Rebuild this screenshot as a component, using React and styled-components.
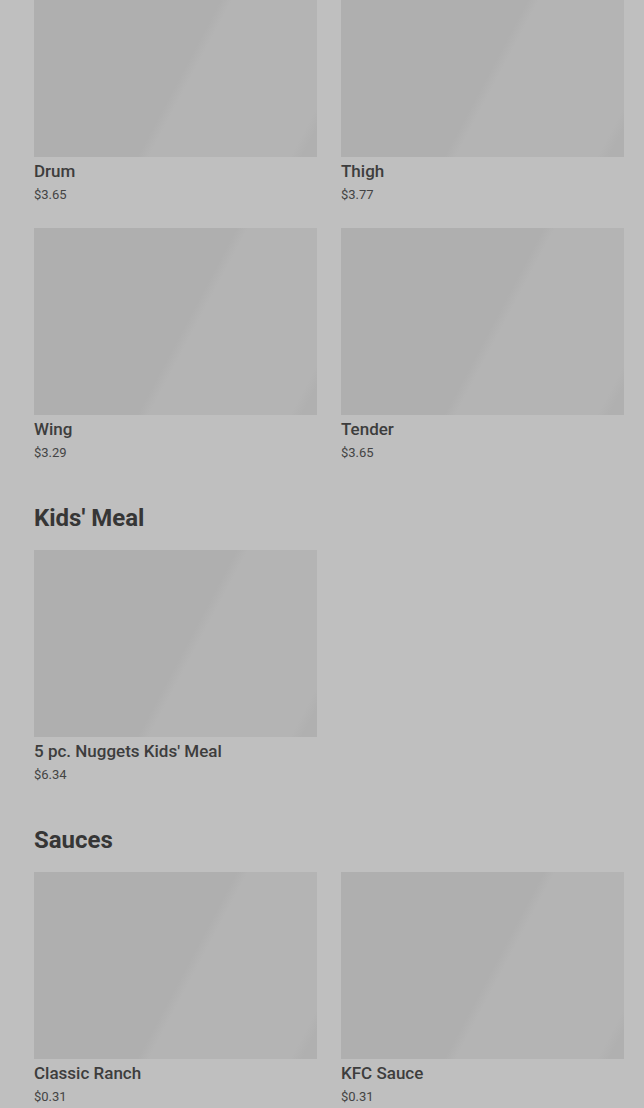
import React from "react";
import styled, { createGlobalStyle } from "styled-components";

const sections = [
  {
    title: null,
    items: [
      { name: "Drum", price: "$3.65" },
      { name: "Thigh", price: "$3.77" },
      { name: "Wing", price: "$3.29" },
      { name: "Tender", price: "$3.65" },
    ],
  },
  {
    title: "Kids' Meal",
    items: [{ name: "5 pc. Nuggets Kids' Meal", price: "$6.34" }],
  },
  {
    title: "Sauces",
    items: [
      { name: "Classic Ranch", price: "$0.31" },
      { name: "KFC Sauce", price: "$0.31" },
    ],
  },
];

function App() {
  return (
    <>
      <GlobalStyle />
      <Page>
        <Menu>
          {sections.map((section, i) => (
            <Section key={i} first={!section.title}>
              {section.title && <Heading>{section.title}</Heading>}
              <Grid>
                {section.items.map((item) => (
                  <Card key={item.name}>
                    <Thumb />
                    <Name>{item.name}</Name>
                    <Price>{item.price}</Price>
                  </Card>
                ))}
              </Grid>
            </Section>
          ))}
        </Menu>
      </Page>
    </>
  );
}

const GlobalStyle = createGlobalStyle`
  html, body {
    margin: 0;
    background: #bfbfbf;
    font-family: Roboto, "Liberation Sans", sans-serif;
  }
`;

const Page = styled.div`
  height: 1108px;
  overflow: hidden;
  background: #bfbfbf;
`;

const Menu = styled.div`
  margin-top: -30px;
  padding: 0 20px 0 34px;
`;

const Section = styled.section`
  margin-top: ${(p) => (p.first ? "0" : "40px")};
`;

const Heading = styled.h2`
  margin: 0 0 16px;
  font-size: 24px;
  line-height: 32px;
  font-weight: 700;
  color: #363636;
`;

const Grid = styled.div`
  display: grid;
  grid-template-columns: 283px 283px;
  column-gap: 24px;
  row-gap: 24px;
`;

const Card = styled.div`
  display: flex;
  flex-direction: column;
`;

const Thumb = styled.div`
  height: 187px;
  background: linear-gradient(
    118deg,
    #afafaf 0%,
    #afafaf 53%,
    #b4b4b4 56%,
    #b4b4b4 93%,
    #b0b0b0 96%,
    #b0b0b0 100%
  );
`;

const Name = styled.div`
  margin-top: 4px;
  font-size: 17px;
  line-height: 20px;
  font-weight: 500;
  color: #3d3d3d;
`;

const Price = styled.div`
  margin-top: 5px;
  font-size: 13px;
  line-height: 18px;
  color: #444444;
`;

export default App;
